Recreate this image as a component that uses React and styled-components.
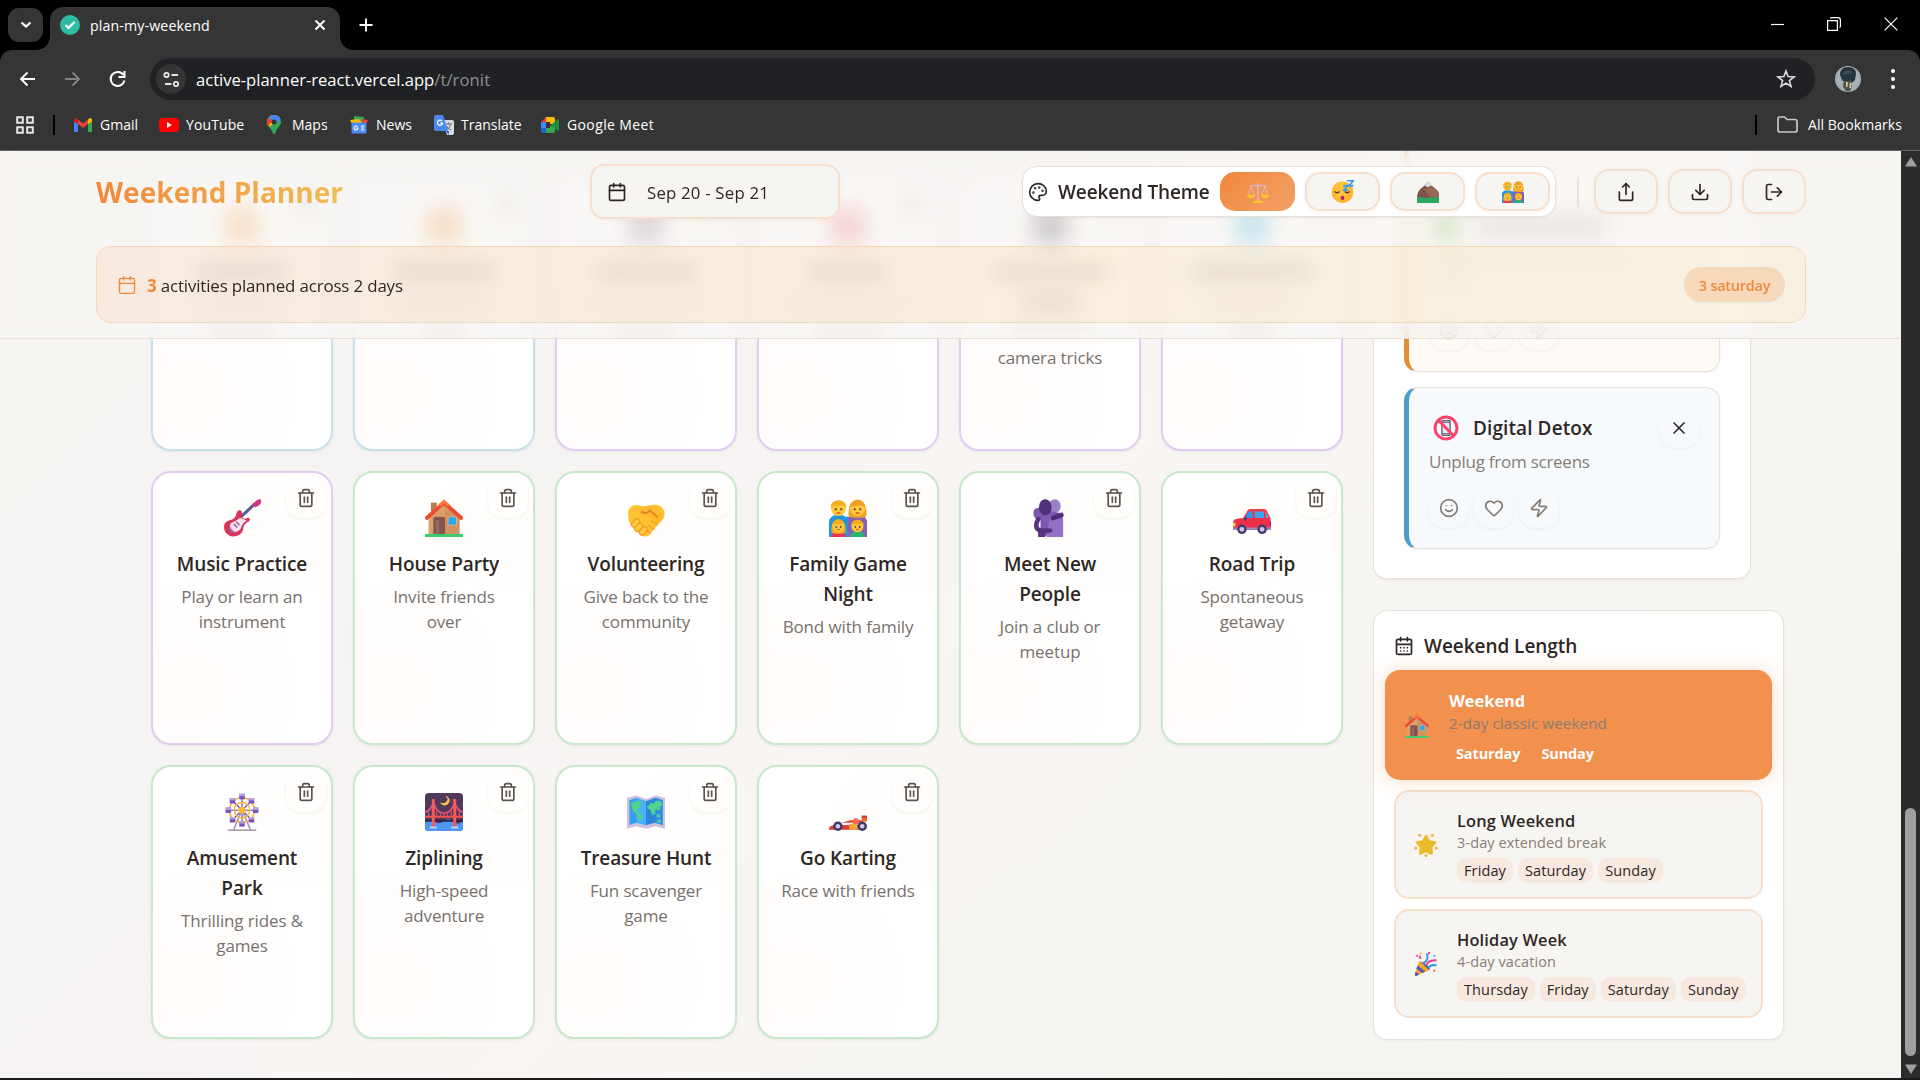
import React from "react";
import styled, { createGlobalStyle, css } from "styled-components";
import {
  Calendar, CalendarDays, Palette, Share, Download, LogOut, Trash2, X, Smile, Heart, Zap,
} from "lucide-react";

const Global = createGlobalStyle`
  * { box-sizing: border-box; }
  html, body { margin: 0; padding: 0; background: #000; }
  body { font-family: "Open Sans", "Noto Sans", sans-serif; color: #2e2724; overflow: hidden; }
  svg { display: block; flex: none; }
  button { font: inherit; }
`;

/* ---------- emoji drawings, all on a 32 x 32 grid ---------- */

const Person = ({ x, y, hair, shirt, long, s = 1 }) => (
  <g transform={`translate(${x} ${y}) scale(${s})`}>
    <path d="M-8 17v-4c0-5 3-8 8-8s8 3 8 8v4z" fill={shirt} />
    {long && <path d="M-7.500 6C-8-3-4-7.500 0-7.500S8-3 7.500 6c-1 2.500-14 2.500-15 0z" fill={hair} />}
    <circle r="6.300" fill="#ffc83a" />
    <path d="M-6.500-1C-7-9 7-9 6.500-1 4-4-3-2-6.500-1z" fill={hair} />
    <circle cx="-2.300" cy=".6" r=".9" fill="#4a3450" />
    <circle cx="2.300" cy=".6" r=".9" fill="#4a3450" />
    <path d="M-1.500 3.300q1.500 1.200 3 0" stroke="#d3452d" strokeWidth="1" fill="none" />
  </g>
);

const drawings = {
  guitar: (
    <>
      <path d="M15 15 27 4" stroke="#5c5a97" strokeWidth="2.600" />
      <path d="M25.500 4.500 28 2l3-1.500 1 2L30 5l-3 1.500z" fill="#d62f86" stroke="#d62f86" strokeLinejoin="round" />
      <path d="M1 22c1-4 5-4 7-5s3-3 3.500-5.500c.5-2.500 4.500-3 4.500 0 0 2-1 3 0 4 1.500 1.500 3 1.500 4.500.5s3.500 1.500 1 3c-3 2-4 3-4.500 6-.6 4-4 6.500-8.500 6.500S0 27 1 22z" fill="#d9345a" />
      <path d="M7 20c4-1 6-4 8-4l5 2c-3 2-4.500 4-5 7-3 3-6 3-7 2-2-2-3-5-1-7z" fill="#fde3f6" />
      <path d="m11 19 3 3M9 21l3 3M5.500 24.500l4 4" stroke="#9b7aa5" strokeWidth="1.500" />
    </>
  ),
  house: (
    <>
      <path d="M5 3h5v10H5z" fill="#b97f4e" />
      <path d="M3 15 16 3l13 12v15H3z" fill="#dca06c" />
      <path d="M16 3 29 15v15H18z" fill="#d3935f" />
      <path d="M1.500 16 16 3l14.500 13" fill="none" stroke="#ee4b35" strokeWidth="3.200" strokeLinecap="round" />
      <path d="M12 5.500 16 2l4 3.500" fill="none" stroke="#ff7440" strokeWidth="2.500" />
      <path d="M7 30V17q0-2 2-2h6q2 0 2 2v13z" fill="#84564f" />
      <path d="M9 30V18h3v12z" fill="#986960" />
      <path d="M19.500 15h7v7h-7z" fill="#28a7f5" stroke="#f6ba7a" strokeWidth=".6" />
      <path d="M0 29.500h32V32H0z" fill="#3ecb70" />
    </>
  ),
  handshake: (
    <>
      <path d="M1 11c0-3 3-6 7-6 4 0 5 2 8 1 3-1 9-2 12 0 3 1.500 4 5 3.500 8-.5 3-4 6-6 8L19 30c-1.500 2-5 2-7 1L3 21c-2-2-2-6-2-10z" fill="#ffc331" />
      <path d="M11 9c2-3 6-4 9-3l9 6c3 2 0 7-3 9l-8-7c-2 1-4 1-6-.5-1-1-2-3-1-4.500z" fill="#fdb92b" />
      <path d="M12 10.500q5 3 7-1l7 6" fill="none" stroke="#e07b25" strokeWidth="1.300" />
      <g stroke="#f09b26" strokeWidth="1" fill="#ffca3c">
        <rect x="3" y="18" width="8" height="4.600" rx="2.300" transform="rotate(-45 7 20)" />
        <rect x="6" y="21.500" width="8" height="4.600" rx="2.300" transform="rotate(-45 10 24)" />
        <rect x="10" y="24.500" width="8" height="4.600" rx="2.300" transform="rotate(-45 14 27)" />
      </g>
      <path d="m18 22 5 4M20 18l6 4M16 26l4 3" stroke="#ef8c28" strokeWidth=".9" />
    </>
  ),
  family: (
    <>
      <path d="M0 32V20q0-5 5-5h11v17z" fill="#2496df" />
      <path d="M32 32V20q0-5-5-5H16v17z" fill="#8561b5" />
      <Person x={8} y={8} hair="#f8ad25" shirt="#2496df" />
      <Person x={24} y={8} hair="#f0a023" shirt="#8561b5" long />
      <Person x={8} y={23} hair="#f7a91f" shirt="#e63456" long s={0.8} />
      <Person x={24} y={23} hair="#f7a91f" shirt="#27b46c" s={0.8} />
    </>
  ),
  hug: (
    <>
      <ellipse cx="20" cy="6" rx="5" ry="5.800" fill="#9a80c7" />
      <path d="M2 12c0-4 3-5 6-4l12 3c5 0 7 3 7 7v13H8V18c-3-1-6-2-6-6z" fill="#7d57b0" />
      <path d="M16 14h8q3 2 3 6v12H13z" fill="#9370c6" />
      <ellipse cx="12" cy="7" rx="5.300" ry="6.800" fill="#513179" />
      <path d="M6 17q-4 8 2 9.500h8" fill="none" stroke="#55337f" strokeWidth="3.800" strokeLinecap="round" />
      <path d="m18.500 16 7-2.500" stroke="#4e2e78" strokeWidth="4" strokeLinecap="round" />
      <path d="M6 26h6v6H6z" fill="#55337f" />
    </>
  ),
  car: (
    <>
      <path d="M8 17 12 10Q12.500 8.500 14.500 8.500H26q2 0 2.800 2L32 17z" fill="#f03a45" />
      <path d="m9.500 17 3.500-6.500h3.500V17z" fill="#2d95f3" />
      <path d="M18.500 10.500H26V17h-7.500z" fill="#3aa5fa" />
      <path d="M27.500 10.500 30.500 17H28z" fill="#48b3ff" />
      <path d="M0 20q0-3 5-3.500l4-.5h21q2 1 2 4v5H0z" fill="#ee3047" />
      <path d="M0 24h32v2H0z" fill="#a584b5" />
      <path d="M0 20h2v3H0z" fill="#ffda47" />
      <path d="M31 19h1v3h-1z" fill="#8e1f9b" />
      <g fill="#433b6b">
        <circle cx="7.500" cy="25.500" r="4" /><circle cx="24.500" cy="25.500" r="4" />
        <path d="M9.500 15h2v3h-2z" />
      </g>
      <g fill="#d9c5ef"><circle cx="7.500" cy="25.500" r="2" /><circle cx="24.500" cy="25.500" r="2" /></g>
    </>
  ),
  ferris: (
    <>
      <path d="m16 14-7 17M16 14l7 17" stroke="#a08bc5" strokeWidth="1.300" />
      <path d="M4 31.300h24" stroke="#9e97ab" strokeWidth="1.300" />
      <g stroke="#6650a6" strokeWidth="1">
        <path d="M16 3v23M4.500 14.500h23M8 6.500l16 16M24 6.500l-16 16" />
      </g>
      <circle cx="16" cy="14.500" r="10.500" fill="none" stroke="#f9b23c" strokeWidth="1.400" />
      <circle cx="16" cy="14.500" r="6.500" fill="none" stroke="#f9b23c" strokeWidth="1.200" />
      <circle cx="16" cy="14.500" r="3" fill="#fbb72f" />
      {[[16, 3], [24, 6.5], [27.5, 14.5], [24, 22.5], [16, 26], [8, 22.5], [4.5, 14.5], [8, 6.5]].map(([x, y]) => (
        <g key={`${x}-${y}`}>
          <rect x={x - 2.3} y={y - 2.3} width="4.600" height="4.600" fill="#7a4fc4" />
          <rect x={x - 2.3} y={y - 2.3} width="4.600" height="2" fill="#b5a3d9" />
        </g>
      ))}
    </>
  ),
  bridge: (
    <>
      <rect width="32" height="32" rx="3" fill="#503a5b" />
      <path d="M0 24q4-3 8 0t8-.500 8 .5 8-.500V29q0 3-3 3H3q-3 0-3-3z" fill="#4f97f6" />
      <path d="M0 22.500h32v1.800H0z" fill="#2e2444" />
      <path d="M18 3q3 2 0 5-2 1.500-4 1 2 2 5 0 3-3-1-6z" fill="#ffc44a" stroke="#ffc44a" />
      <path d="M0 16q5-1 7-8 3 9 9 9t9-9q2 7 7 8" fill="none" stroke="#f2527c" strokeWidth="1.300" />
      <path d="M3 15v5M10 14v6M13 16v4M16 17v3M19 16v4M22 14v6M29 15v5" stroke="#e74e62" strokeWidth=".9" />
      <path d="M0 20h32" stroke="#fa534b" strokeWidth="1.800" />
      <path d="M7 5v24M25 5v24" stroke="#fa5a55" strokeWidth="2.500" />
      <path d="M4 29h6M22 29h6" stroke="#b8d2ff" strokeWidth="1.600" />
    </>
  ),
  map: (
    <>
      <path d="M0 4 8 2l8 3 8-3 8 2v26l-8-2-8 2-8-2-8 2z" fill="#cfc0dd" />
      <path d="M2 6 8 4l8 3v20l-8-2-6 2z" fill="#379fee" />
      <path d="m16 7 8-3 6 2v21l-6-2-8 2z" fill="#2c86d8" />
      <path d="M8 4l8 3v20l-8-2z" fill="#4bb0f9" />
      <path d="M24 4l6 2v21l-6-2z" fill="#2f8ee2" />
      <path d="M3 9l4-2 3-.5 2 1 1 2-2-.5-1 1.500 1.500 1-2 1.500-1.500 2 1.500 1.500 2.500 1 1 2-2 4-1.500-1-.5-4-2.500-2-2-3zM17 11l2-1 1-2 2.500 1 1.500-2 3-.5 2 1 .5 3-2 1.500.5 2-2 1-1-1.500-1.500 1 .5 2.500-2 2-1.500-2-1-3-2-1zM25 18h3v2.500h-3zM25.500 23l3-.5v2.500h-3z" fill="#4fd48b" />
    </>
  ),
  racecar: (
    <>
      <path d="M0 30q0-2 4-3l14-4h9l4 3v3q0 2-2 2H0z" fill="#e33b31" />
      <path d="M8 25h18v2H8z" fill="#fff" />
      <path d="M17 26h7v5h-7z" fill="#f5a638" />
      <path d="M20 24q0-3 3-3l2 1v4h-5z" fill="#ff6b52" />
      <path d="M27.500 20H32v4h-4.500z" fill="#f2672f" />
      <path d="M27.500 19H32v2h-4.500z" fill="#c94136" />
      <g fill="#41386a"><circle cx="7.500" cy="28" r="4" /><circle cx="28" cy="28" r="4" /></g>
      <g fill="#d5c7e8"><circle cx="7.500" cy="28" r="1.900" /><circle cx="28" cy="28" r="1.900" /></g>
    </>
  ),
  scales: (
    <>
      <path d="M16 3v25" stroke="#d9b8d6" strokeWidth="2.200" />
      <path d="M4 8q6-3 12 0 6-3 12 0" fill="none" stroke="#d9b8d6" strokeWidth="1.800" />
      <path d="M6 8 2 20M6 8l5 12M26 8l-5 12M26 8l4 12" stroke="#e5c0c8" strokeWidth="1.200" fill="none" />
      <path d="M0 20h12q-1 5-6 5t-6-5zM20 20h12q-1 5-6 5t-6-5zM8 32q1-4 8-4t8 4z" fill="#ffc42e" />
      <circle cx="16" cy="2.500" r="2" fill="#f7a63a" />
    </>
  ),
  sleepy: (
    <>
      <circle cx="16" cy="17" r="15" fill="#ffb62f" />
      <circle cx="15" cy="14" r="11" fill="#ffcb40" opacity=".6" />
      <path d="M5 16q3.500 3.500 7 0M19 16q3.500 3.500 7 0" fill="none" stroke="#5a3148" strokeWidth="1.800" />
      <ellipse cx="16" cy="25" rx="2.600" ry="3" fill="#b51c73" />
      <path d="M22 1h9l-6 7h6M17 8h6l-5 6h6" fill="none" stroke="#3c9df4" strokeWidth="2.500" />
    </>
  ),
  mountain: (
    <>
      <path d="M0 25Q0 14 8 9l9-8 4 5 8 7q3 3 3 12z" fill="#7e5248" />
      <path d="m10 12 12-4 9 8q1 4 1 9l-14-2z" fill="#9a6656" />
      <path d="m11 7 6-6 6 7-4-1-3 2z" fill="#dcdbe8" />
      <path d="M0 23q16 3 32 0v9H0z" fill="#2fa564" />
    </>
  ),
  star: (
    <>
      <path d="m16 4 4.200 7 8 1.500-5.200 6.500.8 8.500-7.800-3.200-7.800 3.200L9 19l-5.200-6.500 8-1.500z" fill="#ebbb2c" stroke="#ebbb2c" strokeWidth="3" strokeLinejoin="round" />
      <g fill="#eeb72c">
        <circle cx="7.500" cy="3" r="2" /><circle cx="24.500" cy="3" r="2" /><circle cx="2.200" cy="20" r="2" />
        <circle cx="29.800" cy="20" r="2" /><circle cx="16" cy="30" r="2" />
      </g>
    </>
  ),
  party: (
    <>
      <path d="M7 12 1 30q0 2 2 1.500L21 24q1-3-4-7T7 12z" fill="#f5a233" />
      <path d="m5 18 10 8-4 2-8-6zM9 13l9 9 2 2 1-1q0-3-5-6.500T9 13zM2 26l5 4-4 2-2-1z" fill="#4f59b8" />
      <path d="M12 15q6-2 6-9 0-3-2-3M20 20q4-4 10-2" fill="none" stroke="#269ae8" strokeWidth="2.500" />
      <path d="M17 17q1-6 13-6M9 9 7 5M3 5h2M20 3v-3" fill="none" stroke="#ee3d9c" strokeWidth="2.500" />
      <circle cx="27" cy="25" r="1.600" fill="#fa7c52" /><circle cx="9" cy="2" r="1.500" fill="#f8bb2f" />
      <circle cx="27" cy="5" r="1.500" fill="#55b4f2" />
    </>
  ),
  nophone: (
    <>
      <rect x="11" y="7" width="10" height="18" rx="1" fill="#f0e8f6" stroke="#615573" strokeWidth="1.600" />
      <path d="M11 23h10M11 9h10" stroke="#615573" strokeWidth="1.200" />
      <circle cx="16" cy="16" r="13.500" fill="none" stroke="#f8436a" strokeWidth="3.600" />
      <path d="m6.500 6.500 19 19" stroke="#f8436a" strokeWidth="3.600" />
    </>
  ),
};

const Emoji = ({ name, size }) => (
  <svg width={size} height={size} viewBox="0 0 32 32" aria-hidden="true">{drawings[name]}</svg>
);

/* ---------- browser frame ---------- */

const Screen = styled.div`
  width: 1920px; height: 1080px; display: flex; flex-direction: column; overflow: hidden; background: #1b1b1d;
`;
const TabStrip = styled.div`
  height: 50px; background: #000; display: flex; align-items: flex-start; padding-left: 8px; color: #fff;
`;
const TabSearch = styled.div`
  width: 35px; height: 34px; margin-top: 8px; border-radius: 11px; background: #353535;
  display: flex; align-items: center; justify-content: center;
`;
const Tab = styled.div`
  position: relative; width: 290px; height: 43px; margin: 7px 0 0 7px; padding: 0 14px 7px 10px;
  background: #353535; border-radius: 13px 13px 0 0; display: flex; align-items: center;
  &::before, &::after {
    content: ""; position: absolute; bottom: 0; width: 13px; height: 13px;
  }
  &::before { left: -13px; background: radial-gradient(circle at 0 0, transparent 12.5px, #353535 13px); }
  &::after { right: -13px; background: radial-gradient(circle at 100% 0, transparent 12.5px, #353535 13px); }
`;
const TabTitle = styled.span`
  flex: 1; margin: 1px 0 0 10px; font-size: 14.2px; letter-spacing: 0.12px; line-height: 20px; white-space: nowrap;
`;
const NewTab = styled.div`margin: 16px 0 0 17px;`;
const WindowButtons = styled.div`
  margin-left: auto; display: flex; gap: 43px; padding: 17px 22px 0 0; align-items: center;
`;
const ToolbarWrap = styled.div`background: #000;`;
const Toolbar = styled.div`
  height: 58px; background: #353535; border-radius: 12px 12px 0 0; display: flex; align-items: center;
  padding: 0 19px 0 18px; color: #fff;
`;
const NavIcons = styled.div`display: flex; gap: 26px; width: 132px; align-items: center;`;
const Omnibox = styled.div`
  width: 1665px; height: 42px; border-radius: 21px; background: #202124; display: flex; align-items: center;
  padding: 0 19px 0 6px;
`;
const SiteInfo = styled.div`
  width: 30px; height: 30px; border-radius: 50%; background: #353535; display: flex; align-items: center; justify-content: center;
`;
const Address = styled.span`
  flex: 1; margin-left: 10px; font-size: 16.6px; letter-spacing: -0.02px; white-space: nowrap;
  span { color: #8f9194; letter-spacing: 0.1px; }
`;
const Avatar = styled.div`margin-left: 20px;`;
const Dots = styled.div`
  margin-left: auto; padding-right: 6px; display: flex; flex-direction: column; gap: 4px;
  i { width: 4px; height: 4px; border-radius: 50%; background: #fff; }
`;
const BookmarkBar = styled.div`
  height: 43px; background: #353535; border-bottom: 1px solid #6b6466; display: flex; align-items: center;
  padding: 0 16px 9px 16px; color: #fff; font-size: 14px;
`;
const Bar = styled.i`width: 2px; height: 20px; background: #000; margin: 0 ${(p) => p.$after}px 0 ${(p) => p.$before}px;`;
const Bookmark = styled.div`
  display: flex; align-items: center; width: ${(p) => p.$width}px; gap: ${(p) => p.$gap || 8}px;
  letter-spacing: ${(p) => p.$track || 0}px; white-space: nowrap;
`;
const AllBookmarks = styled.div`
  display: flex; align-items: center; gap: 10px; width: 127px; letter-spacing: 0.05px; white-space: nowrap;
`;
const Spacer = styled.div`flex: 1;`;

const BookmarkIcon = {
  gmail: (
    <svg width="18" height="14" viewBox="0 0 18 14">
      <path d="M0 2v12h4V5z" fill="#4285f4" /><path d="M18 2v12h-4V5z" fill="#34a853" />
      <path d="M4 1.500 9 5.500l5-4V6l-5 4-5-4z" fill="#ea4335" /><path d="M0 2q0-2 2-2l2 1.500V6L0 3.500z" fill="#c5221f" />
      <path d="M18 2q0-2-2-2l-2 1.500V6l4-2.500z" fill="#fbbc04" />
    </svg>
  ),
  youtube: (
    <svg width="20" height="14" viewBox="0 0 20 14"><rect width="20" height="14" rx="3.500" fill="#f00" /><path d="M8 4v6l5-3z" fill="#fff" /></svg>
  ),
  maps: (
    <svg width="14" height="19" viewBox="0 0 14 19">
      <path d="M7 0a7 7 0 0 1 7 7c0 4-4 6-5 9-.5 2-1 3-2 3s-1.500-1-2-3C4 13 0 11 0 7a7 7 0 0 1 7-7z" fill="#34a853" />
      <path d="M7 0a7 7 0 0 1 6.500 4.500L2.500 11.500C1 10 0 9 0 7a7 7 0 0 1 7-7z" fill="#fbbc04" />
      <path d="M7 0a7 7 0 0 1 6.500 4.500L8 9.500 1.600 2.500A7 7 0 0 1 7 0z" fill="#4285f4" />
      <path d="M1.600 2.500 5.500 6 1 11Q0 9 0 7q0-2.500 1.600-4.500z" fill="#ea4335" />
      <circle cx="7" cy="7" r="2.500" fill="#353535" />
    </svg>
  ),
  news: (
    <svg width="18" height="18" viewBox="0 0 18 18">
      <path d="M4 0l10 1-1 6H4z" fill="#34a853" /><path d="M0 4l9-1 4 5H2z" fill="#fbbc04" /><path d="M12 3l6 1-2 5h-4z" fill="#ea4335" />
      <rect x="1.500" y="6.500" width="15" height="11" rx="1" fill="#4f8af5" />
      <path d="M8 12H6M8 12a2 2 0 1 1-.6-1.500M11 10h3.500M11 12h3M11 14h3.500" stroke="#fff" strokeWidth="1.100" fill="none" />
    </svg>
  ),
  translate: (
    <svg width="20" height="20" viewBox="0 0 20 20">
      <path d="M8 5h10q2 0 2 2v11q0 2-2 2h-5z" fill="#d8dade" /><path d="M11 9h7M14.500 7.500V9M17 9q-1 4-5 6M12.500 11q1 3 4.500 4" stroke="#67707c" fill="none" />
      <path d="M2 0h7l5 16H2q-2 0-2-2V2q0-2 2-2z" fill="#4a88f2" /><path d="M12 16l2.500 4L15 16z" fill="#2c61c9" />
      <path d="M8 6A2.600 2.600 0 1 0 8.600 8.200H6.200" stroke="#fff" strokeWidth="1.300" fill="none" />
    </svg>
  ),
  meet: (
    <svg width="18" height="16" viewBox="0 0 18 16">
      <path d="M5 0h7q2 0 2 2v5H9V5H5z" fill="#fbbc04" /><path d="M5 0v5H0z" fill="#ea4335" /><path d="M0 5h5v6H0z" fill="#4285f4" />
      <path d="M0 11h5v5H2q-2 0-2-2z" fill="#1967d2" /><path d="M5 11h4V9l5-1v6q0 2-2 2H5z" fill="#34a853" />
      <path d="m10 8 7-6q1 0 1 1v10q0 1-1 1z" fill="#1e8e3e" />
    </svg>
  ),
};

const bookmarks = [
  { icon: "gmail", label: "Gmail", width: 85 },
  { icon: "youtube", label: "YouTube", width: 108, gap: 7, track: 0.1 },
  { icon: "maps", label: "Maps", width: 83, gap: 11 },
  { icon: "news", label: "News", width: 84 },
  { icon: "translate", label: "Translate", width: 107, gap: 7 },
  { icon: "meet", label: "Google Meet", width: 130, track: 0.38 },
];

function Browser() {
  return (
    <>
      <TabStrip>
        <TabSearch>
          <svg width="12" height="8" viewBox="0 0 12 8"><path d="m1.500 1.500 4.500 4 4.500-4" fill="none" stroke="#fff" strokeWidth="2.200" /></svg>
        </TabSearch>
        <Tab>
          <svg width="20" height="20" viewBox="0 0 20 20"><circle cx="10" cy="10" r="10" fill="#2fbba3" /><path d="m5.500 10 3 3 6-6" fill="none" stroke="#fff" strokeWidth="2.200" /></svg>
          <TabTitle>plan-my-weekend</TabTitle>
          <svg width="12" height="12" viewBox="0 0 12 12"><path d="m1.500 1.500 9 9m0-9-9 9" stroke="#fff" strokeWidth="1.900" /></svg>
        </Tab>
        <NewTab><svg width="18" height="18" viewBox="0 0 18 18"><path d="M9 2.500v13M2.500 9h13" stroke="#fff" strokeWidth="1.900" /></svg></NewTab>
        <WindowButtons>
          <svg width="13" height="13" viewBox="0 0 13 13"><path d="M0 6.500h13" stroke="#fff" strokeWidth="1.200" /></svg>
          <svg width="14" height="14" viewBox="0 0 14 14"><path d="M.6 3.600h9.800v9.800H.6zM3.500 1.500q.2-.9 1.200-.9h6q2.700 0 2.700 2.700v6q0 1-.9 1.200" fill="none" stroke="#fff" strokeWidth="1.200" /></svg>
          <svg width="14" height="14" viewBox="0 0 14 14"><path d="m.7.7 12.600 12.600m0-12.600L.7 13.300" stroke="#fff" strokeWidth="1.200" /></svg>
        </WindowButtons>
      </TabStrip>
      <ToolbarWrap>
        <Toolbar>
          <NavIcons>
            <svg width="19" height="18" viewBox="0 0 19 18"><path d="M17 9H3M9.500 2.500 3 9l6.500 6.500" fill="none" stroke="#fff" strokeWidth="1.900" /></svg>
            <svg width="19" height="18" viewBox="0 0 19 18"><path d="M2 9h14M9.500 2.500 16 9l-6.500 6.500" fill="none" stroke="#838383" strokeWidth="1.900" /></svg>
            <svg width="19" height="18" viewBox="0 0 19 18"><path d="M15.500 5A7 7 0 1 0 16.500 10.500M16.500 1v6h-6" fill="none" stroke="#fff" strokeWidth="2" /></svg>
          </NavIcons>
          <Omnibox>
            <SiteInfo>
              <svg width="17" height="15" viewBox="0 0 17 15"><g fill="none" stroke="#e6e6e6" strokeWidth="1.800"><circle cx="3.500" cy="3" r="2.200" /><path d="M8.500 3H15M2 12h6.500" /><circle cx="13" cy="12" r="2.200" /></g></svg>
            </SiteInfo>
            <Address>active-planner-react.vercel.app<span>/t/ronit</span></Address>
            <svg width="20" height="20" viewBox="0 0 20 20"><path d="m10 2 2.100 5.600 6 .3-4.700 3.700 1.600 5.800-5-3.300-5 3.300 1.600-5.800L1.900 7.900l6-.3z" fill="none" stroke="#dadce0" strokeWidth="1.600" /></svg>
          </Omnibox>
          <Avatar>
            <svg width="26" height="26" viewBox="0 0 26 26">
              <circle cx="13" cy="13" r="13" fill="#a7afb6" />
              <path d="M5 9Q5 1 13 1t8 7l-1 6q-2 3-5 2-6 0-8-2z" fill="#26343c" /><path d="M8 7q3-4 8-2l1 3q-4-1-9 1z" fill="#3f4f58" />
              <path d="M9 14q4 2 7 0l1 6-2 5h-4l-3-4z" fill="#4f5148" /><path d="M11 16h2l-.5 5H11zM14.500 17h2l-.5 5h-1.500z" fill="#d9c9a4" />
            </svg>
          </Avatar>
          <Dots><i /><i /><i /></Dots>
        </Toolbar>
      </ToolbarWrap>
      <BookmarkBar>
        <svg width="18" height="18" viewBox="0 0 18 18"><path d="M1.200 1.200h5.600v5.600H1.200zM11.200 1.200h5.600v5.600h-5.600zM1.200 11.200h5.600v5.600H1.200zM11.200 11.200h5.600v5.600h-5.600z" fill="none" stroke="#e8e8e8" strokeWidth="2" /></svg>
        <Bar $before={19} $after={19} />
        {bookmarks.map((b) => (
          <Bookmark key={b.label} $width={b.width} $gap={b.gap} $track={b.track}>{BookmarkIcon[b.icon]}{b.label}</Bookmark>
        ))}
        <Spacer />
        <Bar $before={0} $after={20} />
        <AllBookmarks>
          <svg width="21" height="17" viewBox="0 0 21 17"><path d="M1 3q0-2 2-2h4.500l2.500 2.500h8q2 0 2 2V14q0 2-2 2H3q-2 0-2-2z" fill="none" stroke="#c7c7c7" strokeWidth="1.700" /></svg>
          All Bookmarks
        </AllBookmarks>
      </BookmarkBar>
    </>
  );
}

/* ---------- page ---------- */

const Viewport = styled.div`height: 927px; display: flex; overflow: hidden;`;
const Page = styled.main`
  position: relative; width: 1901px; height: 100%; overflow: hidden;
  background: linear-gradient(135deg, #f7f5f2 0%, #f6f4f3 30%, #f8f5f3 50%, #f6f5f2 75%, #f6f4f1 100%);
`;
const Scrollbar = styled.div`
  width: 19px; background: #2c2c2c; display: flex; flex-direction: column; align-items: center; padding: 6px 0 4px;
`;
const Thumb = styled.div`width: 11px; height: 248px; border-radius: 6px; background: #9f9f9f; margin: auto 0 8px;`;

const Header = styled.header`
  position: absolute; inset: 0 0 auto 0; height: 188px; padding: 13px 95px 0 96px;
  background: rgba(247, 245, 242, 0.77); backdrop-filter: blur(10px); border-bottom: 1px solid #e9dfd5; z-index: 2;
`;
const TopRow = styled.div`display: flex; align-items: center; height: 55px;`;
const Brand = styled.h1`
  margin: 0; padding-top: 2px; width: 494px; font-size: 28px; font-weight: 700; line-height: 55px; letter-spacing: 0.03px;
  span {
    background: linear-gradient(90deg, #f0883c, #f0bd55); -webkit-background-clip: text; background-clip: text; color: transparent;
  }
`;
const DatePicker = styled.div`
  width: 250px; height: 55px; border: 2px solid #f6dfcd; border-radius: 14px; background: #f7f5f2;
  display: flex; align-items: center; gap: 20px; padding-left: 15px; font-size: 16.8px; letter-spacing: 0.2px;
  box-shadow: 0 2px 4px rgba(240, 136, 60, 0.08);
  span { padding-top: 2px; }
`;
const Actions = styled.div`margin-left: auto; display: flex; align-items: center;`;
const ThemePicker = styled.div`
  width: 534px; height: 51px; border: 1px solid #e8e0d8; border-radius: 15px; background: #fff;
  display: flex; align-items: center; padding: 0 4px 0 5px; box-shadow: 0 1px 3px rgba(0, 0, 0, 0.06);
`;
const ThemeLabel = styled.span`
  margin-left: 10px; width: 162px; font-size: 19px; font-weight: 600; letter-spacing: -0.13px; white-space: nowrap;
`;
const ThemeButtons = styled.div`display: flex; gap: 10px;`;
const ThemeButton = styled.button`
  width: 75px; height: 39px; padding: 0; border-radius: 15px; display: flex; align-items: center; justify-content: center;
  ${(p) => p.$active
    ? css`border: 0; background: linear-gradient(135deg, #f0883c, #f2a068);`
    : css`border: 2px solid #f6dfcd; background: #f7f5f2; box-shadow: 0 1px 3px rgba(240, 136, 60, 0.12);`}
`;
const Divider = styled.i`width: 2px; height: 30px; background: #e8e1da; margin: 0 15px 0 21px;`;
const ToolButtons = styled.div`display: flex; gap: 10px;`;
const ToolButton = styled.button`
  width: 64px; height: 45px; padding: 0; border: 2px solid #f6dfcd; border-radius: 15px; background: #f7f5f2; color: #2e2724;
  display: flex; align-items: center; justify-content: center; box-shadow: 0 1px 3px rgba(240, 136, 60, 0.1);
`;
const Summary = styled.div`
  margin-top: 27px; height: 77px; border: 1px solid #f8d6ba; border-radius: 15px; padding: 0 20px 0 20px;
  display: flex; align-items: center; font-size: 16.9px; letter-spacing: -0.15px;
  background: linear-gradient(90deg, rgba(240, 136, 60, 0.1), rgba(240, 190, 85, 0.14) 60%, rgba(240, 215, 130, 0.14));
  b { color: #f0883c; font-weight: 700; }
  svg { color: #f0883c; margin-right: 10px; }
`;
const SummaryText = styled.span`padding-top: 2px;`;
const DayCount = styled.span`
  margin-left: auto; height: 35px; width: 101px; border-radius: 18px; background: rgba(243, 180, 125, 0.4); color: #f0883c;
  font-size: 14.4px; font-weight: 600; display: flex; align-items: center; justify-content: center; letter-spacing: -0.2px;
  padding-top: 1px; box-shadow: 0 1px 2px rgba(0, 0, 0, 0.04);
`;

const Content = styled.div`display: flex; padding-left: 151px;`;
const CardGrid = styled.div`
  display: grid; grid-template-columns: repeat(6, 182px); grid-auto-rows: 274px; gap: 20px; align-content: start;
  padding-top: 26px; margin-right: 30px;
`;
const tones = { rest: "#c6e0ec", create: "#e3ccf2", social: "#c7e8c9" };
const Card = styled.article`
  position: relative; border: 2px solid ${(p) => tones[p.$tone]}; border-radius: 20px; text-align: center;
  padding: 26px 18px 0; display: flex; flex-direction: column; align-items: center;
  background:
    radial-gradient(circle at 20% 80%, rgba(240, 136, 60, 0.03), transparent 50%),
    radial-gradient(circle at 80% 20%, rgba(240, 190, 85, 0.02), transparent 50%), #fff;
  box-shadow: 0 1px 3px rgba(0, 0, 0, 0.06);
`;
const CardTitle = styled.h3`
  margin: 12px 0 0; font-size: 19px; line-height: 30px; font-weight: 600; letter-spacing: -0.12px; color: #2e2724;
`;
const CardText = styled.p`
  margin: ${(p) => p.$top || 5}px -6px 0; font-size: 17px; line-height: 25px; letter-spacing: -0.13px; color: #77716e;
`;
const Remove = styled.button`
  position: absolute; top: 5px; right: 5px; width: 40px; height: 40px; padding: 0; border: 0; border-radius: 15px;
  background: transparent; color: #5a5350; display: flex; align-items: center; justify-content: center;
  box-shadow: 0 1px 3px rgba(120, 90, 60, 0.09);
`;
const Blot = styled.i`
  width: ${(p) => p.$w}px; height: ${(p) => p.$h}px; margin-top: ${(p) => p.$top || 0}px; margin-left: ${(p) => p.$left || 0}px;
  border-radius: 8px; background: ${(p) => p.$color}; flex: none;
`;

const Sidebar = styled.aside`display: flex; flex-direction: column; gap: 31px;`;
const Plan = styled.section`
  width: 378px; height: 428px; border: 1px solid #e8e1da; border-top: 0; border-radius: 0 0 14px 14px; background: #fff;
  padding: 0 30px; display: flex; flex-direction: column; gap: 15px; box-shadow: 0 1px 3px rgba(0, 0, 0, 0.05);
`;
const Activity = styled.article`
  height: ${(p) => p.$height}px; border: 1px solid #e6e0d9; border-left: 5px solid ${(p) => p.$edge}; border-radius: 14px;
  ${(p) => p.$cut && css`border-top: 0; border-top-left-radius: 0; border-top-right-radius: 0;`}
  background: ${(p) => p.$fill}; padding: 19px 20px 0; flex: none; box-shadow: 0 1px 3px rgba(0, 0, 0, 0.05);
`;
const ActivityHead = styled.div`
  display: flex; align-items: center; height: 41px; padding-left: 4px;
`;
const ActivityTitle = styled.h4`
  margin: 0 0 0 14px; flex: 1; font-size: 19px; font-weight: 600; letter-spacing: 0.1px; line-height: 30px;
`;
const ActivityLines = styled.div`height: 49px; padding: 8px 0 0 2px; display: flex; flex-direction: column;`;
const ActivityText = styled.p`margin: 1px 0 0; font-size: 17px; line-height: 25px; letter-spacing: -0.25px; color: #877d74;`;
const SoftButton = styled.button`
  width: 40px; height: 40px; padding: 0; border: 0; border-radius: 16px; background: transparent; color: ${(p) => p.$color};
  display: flex; align-items: center; justify-content: center; box-shadow: 0 1px 3px rgba(120, 90, 60, 0.08);
`;
const Moods = styled.div`display: flex; gap: 5px; margin-top: ${(p) => p.$top}px;`;

const LengthPanel = styled.section`
  width: 411px; height: 430px; border: 1px solid #e8e1da; border-radius: 14px; background: #fff; padding: 20px 20px 0;
  box-shadow: 0 1px 3px rgba(0, 0, 0, 0.05);
`;
const LengthTitle = styled.h3`
  margin: 0; height: 30px; display: flex; align-items: center; gap: 10px; font-size: 19px; font-weight: 600;
  letter-spacing: -0.05px;
`;
const Options = styled.div`display: flex; flex-direction: column; gap: 10px; margin-top: 10px;`;
const Option = styled.div`
  height: 109px; border-radius: 15px; display: flex; align-items: center;
  ${(p) => p.$active
    ? css`margin: 0 -9px; background: #f2904d; padding-left: 20px; box-shadow: 0 0 20px rgba(240, 136, 60, 0.3), 0 -1px 0 #f2904d;
        position: relative;`
    : css`border: 2px solid #f6dfcd; background: #f7f5f2; padding-left: 18px;`}
`;
const OptionBody = styled.div`margin-left: ${(p) => (p.$active ? 20 : 19)}px; padding-top: ${(p) => (p.$active ? 3 : 2)}px;`;
const OptionName = styled.div`
  font-size: 16.4px; font-weight: ${(p) => (p.$active ? 700 : 600)}; line-height: 24px;
  letter-spacing: ${(p) => (p.$active ? 0 : 0.15)}px; color: ${(p) => (p.$active ? "#fff" : "#2e2724")};
`;
const OptionNote = styled.div`
  font-size: ${(p) => (p.$active ? 15.2 : 14.5)}px; font-weight: 500; line-height: 20px; color: #8a7d73; letter-spacing: 0.1px;
`;
const Days = styled.div`display: flex; gap: 5px; margin-top: ${(p) => (p.$active ? 8 : 5)}px;`;
const Day = styled.span`
  height: 25px; line-height: 25px; border-radius: 9px; padding: 0 7px; white-space: nowrap;
  ${(p) => p.$active
    ? css`color: #fff; font-weight: 700; margin-right: 2px; font-size: 14.5px; letter-spacing: -0.12px;`
    : css`color: #2e2724; font-weight: 500; font-size: 14.5px; letter-spacing: 0.12px; background: #f7e9e0;`}
`;

const ink = "rgba(46, 39, 36, 0.45)";
const softInk = "rgba(119, 113, 110, 0.3)";

const coveredCards = [
  { tone: "rest", blob: "#f5a04a", w: 96, lines: [100, 66] },
  { tone: "rest", blob: "#f0953f", w: 104, lines: [108, 50] },
  { tone: "create", blob: "#8e7d9b", w: 106, lines: [130, 62] },
  { tone: "create", blob: "#f06a70", w: 80, lines: [125, 68] },
  { tone: "create", blob: "#4e4858", w: 118, wrap: 60, tail: "camera tricks" },
  { tone: "create", blob: "#35b5e5", w: 126, lines: [100, 50] },
];

const cards = [
  { tone: "create", icon: "guitar", title: "Music Practice", text: ["Play or learn an", "instrument"] },
  { tone: "social", icon: "house", title: "House Party", text: ["Invite friends", "over"] },
  { tone: "social", icon: "handshake", title: "Volunteering", text: ["Give back to the", "community"] },
  { tone: "social", icon: "family", title: "Family Game Night", text: ["Bond with family"] },
  { tone: "social", icon: "hug", title: "Meet New People", text: ["Join a club or", "meetup"] },
  { tone: "social", icon: "car", title: "Road Trip", text: ["Spontaneous", "getaway"] },
  { tone: "social", icon: "ferris", title: "Amusement Park", text: ["Thrilling rides &", "games"] },
  { tone: "social", icon: "bridge", title: "Ziplining", text: ["High-speed", "adventure"] },
  { tone: "social", icon: "map", title: "Treasure Hunt", text: ["Fun scavenger", "game"] },
  { tone: "social", icon: "racecar", title: "Go Karting", text: ["Race with friends"] },
];

const lengths = [
  { icon: "house", name: "Weekend", note: "2-day classic weekend", days: ["Saturday", "Sunday"], active: true },
  { icon: "star", name: "Long Weekend", note: "3-day extended break", days: ["Friday", "Saturday", "Sunday"] },
  { icon: "party", name: "Holiday Week", note: "4-day vacation", days: ["Thursday", "Friday", "Saturday", "Sunday"] },
];

const moodIcons = [Smile, Heart, Zap];
const MoodRow = ({ top }) => (
  <Moods $top={top}>
    {moodIcons.map((Icon, i) => (
      <SoftButton key={i} $color="#877d74"><Icon size={20} strokeWidth={2} /></SoftButton>
    ))}
  </Moods>
);

function CoveredCard({ tone, blob, w, wrap, lines, tail }) {
  return (
    <Card $tone={tone}>
      <Remove><Trash2 size={20} strokeWidth={2} /></Remove>
      <Blot $w={36} $h={36} $top={3} $color={blob} />
      <Blot $w={w} $h={15} $top={20} $color={ink} />
      {wrap && <Blot $w={wrap} $h={15} $top={15} $color={ink} />}
      {lines && (
        <>
          <Blot $w={lines[0]} $h={11} $top={19} $color={softInk} />
          <Blot $w={lines[1]} $h={11} $top={16} $color={softInk} />
        </>
      )}
      {tail && (
        <>
          <Blot $w={80} $h={9} $top={15} $color={softInk} />
          <CardText $top={12}>{tail}</CardText>
        </>
      )}
    </Card>
  );
}

export default function App() {
  return (
    <Screen>
      <Global />
      <Browser />
      <Viewport>
        <Page>
          <Header>
            <TopRow>
              <Brand><span>Weekend Planner</span></Brand>
              <DatePicker><Calendar size={20} strokeWidth={2} /><span>Sep 20 - Sep 21</span></DatePicker>
              <Actions>
                <ThemePicker>
                  <Palette size={20} strokeWidth={2} />
                  <ThemeLabel>Weekend Theme</ThemeLabel>
                  <ThemeButtons>
                    <ThemeButton $active><Emoji name="scales" size={22} /></ThemeButton>
                    <ThemeButton><Emoji name="sleepy" size={23} /></ThemeButton>
                    <ThemeButton><Emoji name="mountain" size={22} /></ThemeButton>
                    <ThemeButton><Emoji name="family" size={22} /></ThemeButton>
                  </ThemeButtons>
                </ThemePicker>
                <Divider />
                <ToolButtons>
                  <ToolButton><Share size={20} strokeWidth={2} /></ToolButton>
                  <ToolButton><Download size={20} strokeWidth={2} /></ToolButton>
                  <ToolButton><LogOut size={20} strokeWidth={2} /></ToolButton>
                </ToolButtons>
              </Actions>
            </TopRow>
            <Summary>
              <Calendar size={20} strokeWidth={1.7} />
              <SummaryText><b>3</b> activities planned across 2 days</SummaryText>
              <DayCount>3 saturday</DayCount>
            </Summary>
          </Header>

          <Content>
            <CardGrid>
              {coveredCards.map((c, i) => <CoveredCard key={i} {...c} />)}
              {cards.map((c) => (
                <Card key={c.title} $tone={c.tone}>
                  <Remove><Trash2 size={20} strokeWidth={2} /></Remove>
                  <Emoji name={c.icon} size={38} />
                  <CardTitle>{c.title}</CardTitle>
                  <CardText>
                    {c.text.map((line, i) => <React.Fragment key={line}>{i > 0 && <br />}{line}</React.Fragment>)}
                  </CardText>
                </Card>
              ))}
            </CardGrid>

            <Sidebar>
              <Plan>
                <Activity $height={17} $edge="#e18e35" $fill="#fefaf5" $cut />
                <Activity $height={186} $edge="#e18e35" $fill="#fefaf5">
                  <ActivityHead>
                    <Blot $w={26} $h={26} $color="#5fae2c" />
                    <Blot $w={134} $h={15} $left={15} $color={ink} />
                  </ActivityHead>
                  <ActivityLines>
                    <Blot $w={200} $h={11} $color={softInk} />
                    <Blot $w={40} $h={11} $top={13} $color={softInk} />
                  </ActivityLines>
                  <MoodRow top={14} />
                </Activity>
                <Activity $height={162} $edge="#4fa0c8" $fill="#f6fafd">
                  <ActivityHead>
                    <Emoji name="nophone" size={26} />
                    <ActivityTitle>Digital Detox</ActivityTitle>
                    <SoftButton $color="#2e2724"><X size={20} strokeWidth={2} /></SoftButton>
                  </ActivityHead>
                  <ActivityText>Unplug from screens</ActivityText>
                  <MoodRow top={14} />
                </Activity>
              </Plan>

              <LengthPanel>
                <LengthTitle><CalendarDays size={20} strokeWidth={2} />Weekend Length</LengthTitle>
                <Options>
                  {lengths.map((o) => (
                    <Option key={o.name} $active={o.active}>
                      <Emoji name={o.icon} size={24} />
                      <OptionBody $active={o.active}>
                        <OptionName $active={o.active}>{o.name}</OptionName>
                        <OptionNote $active={o.active}>{o.note}</OptionNote>
                        <Days $active={o.active}>{o.days.map((d) => <Day key={d} $active={o.active}>{d}</Day>)}</Days>
                      </OptionBody>
                    </Option>
                  ))}
                </Options>
              </LengthPanel>
            </Sidebar>
          </Content>
        </Page>
        <Scrollbar>
          <svg width="12" height="10" viewBox="0 0 12 10"><path d="M6 0 12 9.500H0z" fill="#9f9f9f" /></svg>
          <Thumb />
          <svg width="12" height="10" viewBox="0 0 12 10"><path d="M6 10 0 .5h12z" fill="#9f9f9f" /></svg>
        </Scrollbar>
      </Viewport>
    </Screen>
  );
}
